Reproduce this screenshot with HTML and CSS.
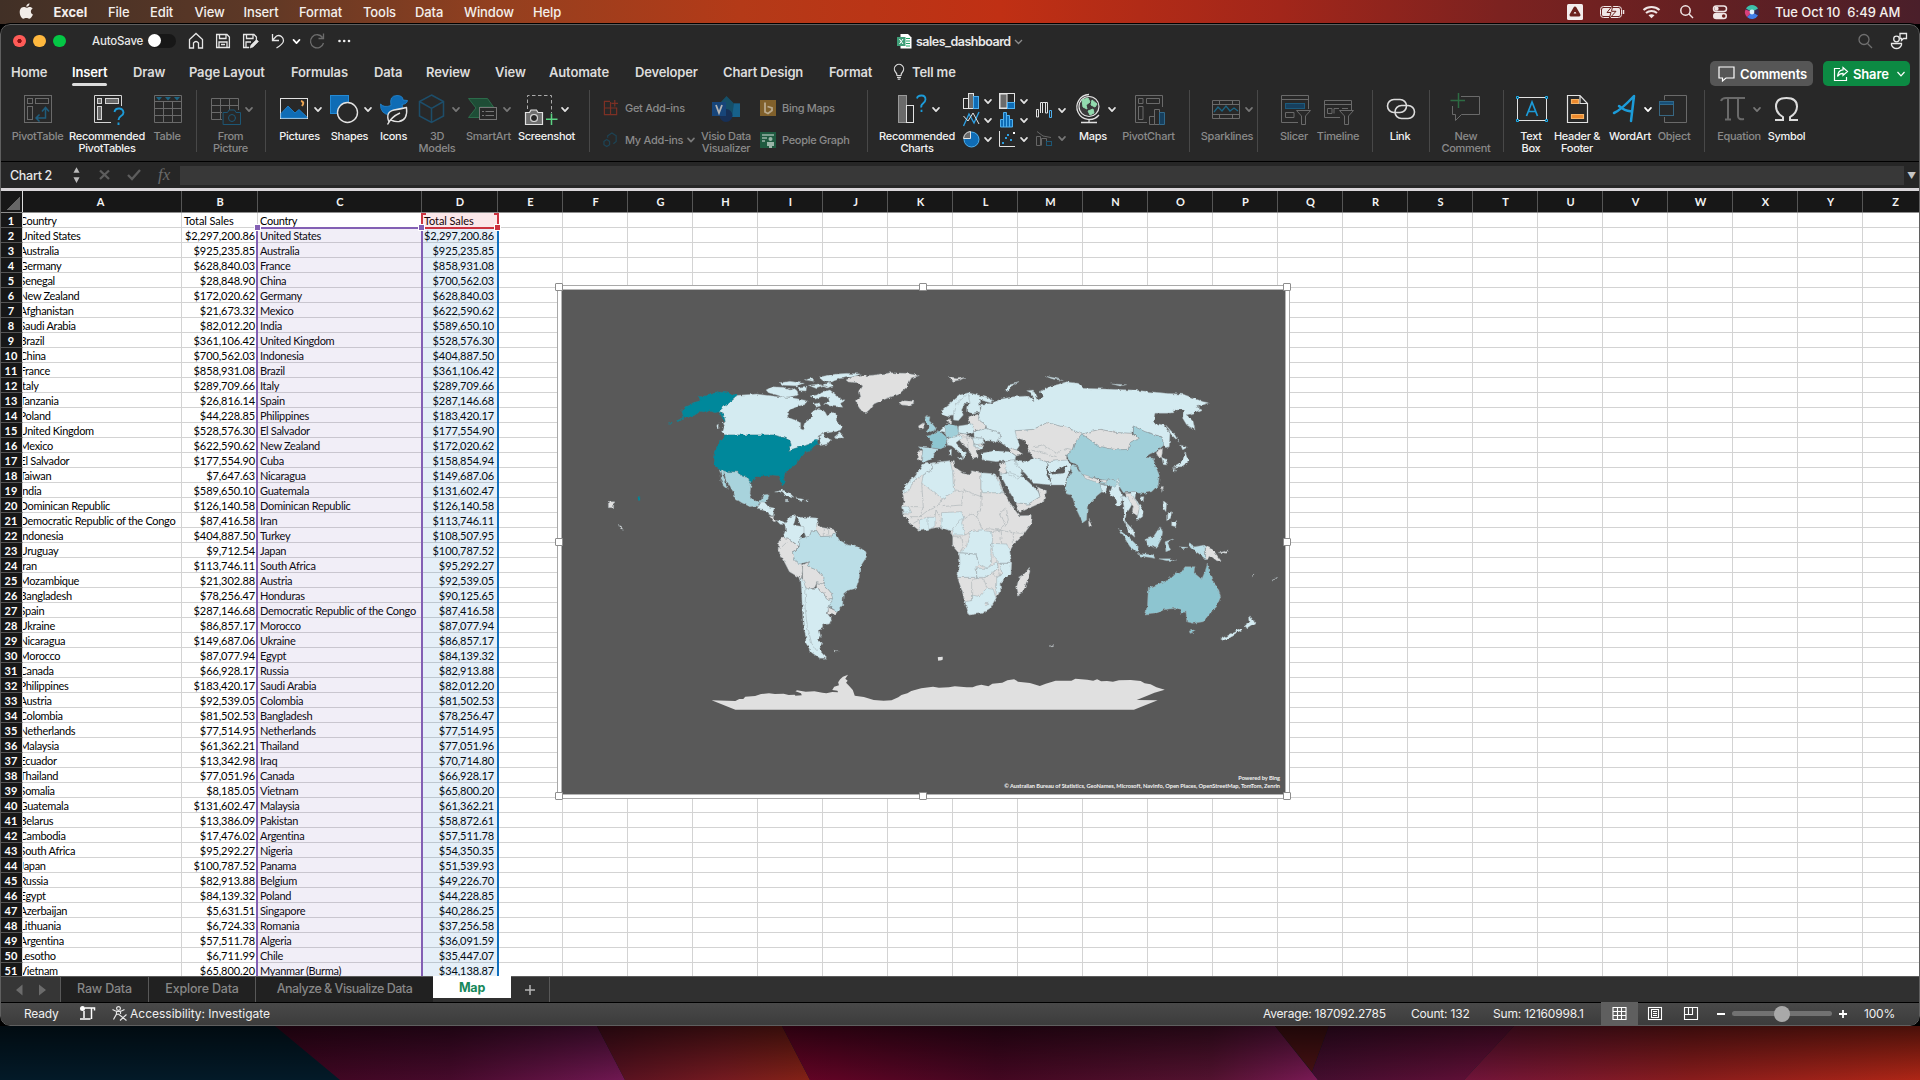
FILE: index.html
```html
<!DOCTYPE html>
<html lang="en">
<head>
<meta charset="utf-8">
<title>sales_dashboard</title>
<link rel="stylesheet" href="styles.css">
</head>
<body>
<svg class="defs" width="0" height="0">
  <defs>
    <path id="chev" d="M-3,-1.6L0,1.6L3,-1.6" fill="none" stroke-width="1.7" stroke-linecap="round" stroke-linejoin="round"/>
    <g id="camera"><path d="M0,3H4L5.5,0.5H11L12.500,3H17V15H0Z"/><circle cx="8.500" cy="8.500" r="3.500"/></g>
    <g id="pivot"><rect x="0.500" y="0.500" width="27" height="27" /><rect x="3.500" y="3.500" width="5" height="5"/><rect x="11.500" y="3.500" width="13" height="5"/><rect x="3.500" y="11.500" width="5" height="13"/></g>
  </defs>
</svg>

<header class="menubar">
  <svg class="apple" viewBox="19 3 16 17"><path d="M29.500,3.200c.2,1.700-1.400,3.600-3.200,3.600c-.2-1.700,1.500-3.400,3.200-3.600zM32.400,15.600c-.8,1.700-1.900,3.200-3.200,3.200c-1.100,0-1.500-.7-2.900-.7s-1.900,.7-2.900,.7c-2.200,0-4.800-6-3.200-9.300c.8-1.700,2.200-2.400,3.600-2.400c1.200,0,1.900,.7,2.800,.7s1.700-.8,3.200-.8c1,0,2.100,.5,2.800,1.500c-2.500,1.500-2.200,5.200,.6,6.200z" fill="#f1ece8"/></svg>
  <nav class="menus"><b>Excel</b><span>File</span><span>Edit</span><span>View</span><span>Insert</span><span>Format</span><span>Tools</span><span>Data</span><span>Window</span><span>Help</span></nav>
  <svg class="tray" viewBox="1564 0 200 24" fill="none" stroke="#f0e6e6" stroke-width="1.500">
    <rect x="1567" y="4" width="16" height="16" rx="1.500" fill="#f3eded" stroke="none"/>
    <path d="M1575,8L1579,15H1571Z" stroke="#6b211d" stroke-width="3" stroke-linejoin="round"/>
    <rect x="1600.500" y="6.500" width="21" height="11" rx="3" stroke-width="1"/><rect x="1602" y="8" width="18" height="8" rx="1.500" fill="#f0e6e6" stroke="none"/><path d="M1623.500,10V14" />
    <path d="M1613,5L1607,12.500H1611L1609,19L1616,11.300H1611.500Z" fill="#f0e6e6" stroke="#6b211d" stroke-width="1"/>
    <path d="M1643.500,10A12,12 0 0 1 1659.500,10M1646,13A8.500,8.500 0 0 1 1657,13" stroke-width="2.100"/><path d="M1648.500,15.300A5,5 0 0 1 1654.500,15.300L1651.500,18.300Z" fill="#f0e6e6" stroke="none"/>
    <circle cx="1685.500" cy="10.500" r="4.700"/><path d="M1689,14L1693,18"/>
    <rect x="1713.500" y="6" width="13" height="5.500" rx="2.750"/><circle cx="1716.500" cy="8.700" r="1.400" fill="#f0e6e6"/><rect x="1713" y="12.800" width="14" height="6.500" rx="3.200" fill="#f0e6e6" stroke="none"/><circle cx="1723.700" cy="16" r="1.800" fill="#6b211d" stroke="none"/>
    <circle cx="1752" cy="12" r="7" fill="#3a2b52" stroke="none"/><path d="M1746,8.500A7,7 0 0 1 1758,8.500L1752,12Z" fill="#3fc0a8" stroke="none"/><path d="M1747,17A7,7 0 0 0 1758,15.500L1752,12Z" fill="#3f7fe8" stroke="none"/><path d="M1745.500,9.500A7,7 0 0 0 1747,17L1752,12Z" fill="#d9407c" stroke="none"/><circle cx="1752" cy="12" r="2.400" fill="#dff3fa" stroke="none"/>
  </svg>
  <span class="clock">Tue Oct 10&nbsp; 6:49 AM</span>
</header>

<main class="window">
  <div class="titlebar">
    <i class="light red"></i><i class="light amber"></i><i class="light green"></i>
    <span class="autosave">AutoSave</span><span class="toggle"></span>
    <svg class="quick" viewBox="184 25 172 32" fill="none" stroke="#e6e6e6" stroke-width="1.300">
      <path d="M189.500,48V39.500L196,33.500L202.500,39.500V48H198.500V43Q196,40 193.500,43V48Z"/>
      <path d="M216.600,34.500H227L229.400,37V47.500H216.600ZM219.500,34.500V38.500H226V34.500M219,47.500V42H227V47.500M221,44.500H225"/>
      <path d="M249,47.500H243.600V34.500H254L256.400,37V40M246.500,34.500V38.500H253V34.500M246,47.500V42H251"/><path d="M250,48L251,45L256.500,39.500L258.500,41.500L253,47Z" fill="#e6e6e6" stroke-width=".6"/>
      <path d="M272.500,34V40.500H279M272.500,40.300L276.500,36A5,5 0 0 1 283.500,41Q283,44 276.500,48"/>
      <path d="M322.500,37.500A6.600,6.600 0 1 0 323.500,43M323.500,33.500V38.500H318.500" stroke="#6c6c6c"/>
      <g fill="#eee" stroke="none"><circle cx="339.500" cy="41" r="1.300"/><circle cx="344.200" cy="41" r="1.300"/><circle cx="349" cy="41" r="1.300"/></g>
      <use href="#chev" x="296.500" y="41.500"/>
    </svg>
    <svg class="docicon" viewBox="0 0 15 15"><path d="M3.500,0H11L14.500,3.500V14.500H3.500Z" fill="#fff"/><path d="M9,4.500H13M9,7H13M9,9.500H13M9,12H13" stroke="#21a366"/><rect y="3" width="8.500" height="9" fill="#3f9e78"/><path d="M2.500,5L6,10M6,5L2.500,10" stroke="#fff"/></svg>
    <span class="doc">sales_dashboard</span>
    <svg class="titlechev" viewBox="0 0 9 9"><path d="M1,3L4.500,6.500L8,3" fill="none" stroke="#8d8d8d" stroke-width="1.300"/></svg>
    <svg class="titleright" viewBox="1855 25 58 32" fill="none" stroke="#6f6f6f" stroke-width="1.300"><circle cx="1865" cy="39.500" r="5"/><path d="M1868.500,43.500L1873,48"/><g stroke="#eaeaea"><circle cx="1897.500" cy="39" r="2.800"/><path d="M1892.500,43.500H1902.500V45Q1901,48.500 1897.500,48.500Q1894,48.500 1892.500,45ZM1901,33.500H1907.500V38.500H1904.500L1902.500,40.500V38.500H1901Z"/></g></svg>
  </div>

  <div class="tabs">
    <nav class="tabnames"><span>Home</span><span class="on">Insert</span><span>Draw</span><span>Page Layout</span><span>Formulas</span><span>Data</span><span>Review</span><span>View</span><span>Automate</span><span>Developer</span><span>Chart Design</span><span>Format</span></nav>
    <svg class="bulb" viewBox="0 0 12 16" fill="none" stroke="#d8d8d8" stroke-width="1.200"><path d="M4,11.500Q4,9.500 2.500,8A4.600,4.600 0 1 1 9.500,8Q8,9.500 8,11.500ZM4,13.300H8M4.700,15.200H7.300"/></svg>
    <span class="tell">Tell me</span>
    <button class="comments"><svg viewBox="0 0 17 16"><path d="M1,1H16V12H8L4.500,15V12H1Z" fill="none" stroke="#fff" stroke-width="1.200"/></svg>Comments</button>
    <button class="share"><svg viewBox="0 0 16 16"><path d="M7,2.500H1.500V14.500H13.500V11M10,1.500L14.500,5.500L10,9.500V7.300Q6.500,7.300 4.500,10.500Q5,4.300 10,3.900Z" fill="none" stroke="#fff" stroke-width="1.200"/></svg>Share<svg class="sharechev" viewBox="0 0 10 10"><path d="M1.500,3L5,6.800L8.500,3" fill="none" stroke="#fff" stroke-width="1.200"/></svg></button>
  </div>

  <section class="ribbon">
    <div class="tool off"><svg viewBox="10 92 55 36" fill="none" stroke="#6a6a6a"><use href="#pivot" x="24" y="96"/><path d="M36,119H45.500V109M42,112.500L45.500,108.500L49,112.500M39.500,115.500L36,119L39.500,122.500" stroke="#1f5d7d" stroke-width="1.500"/></svg><span>PivotTable</span></div>
    <div class="tool"><svg viewBox="65 92 84 36" fill="none" stroke="#d5d5d5"><path d="M111,123.500H94.500V96.500H121.500V107"/><g fill="#6a6a6a"><rect x="97.500" y="99.500" width="4" height="5"/><rect x="105.500" y="99.500" width="13" height="5"/><rect x="97.500" y="107.500" width="4" height="13"/></g><path d="M114.500,113Q115,109.500 119,109.500T123.500,113.500Q123.500,115.500 121,117T118.500,121M118.500,123.500V126" stroke="#1c9bd8" stroke-width="1.900"/></svg><span>Recommended<br>PivotTables</span></div>
    <div class="tool off"><svg viewBox="149 92 36 36" fill="none" stroke="#6a6a6a"><path d="M154.500,96.500H181.500V123.500H154.500ZM154.500,102.500H181.500M154.500,109.500H181.500M154.500,116.500H181.500M163.500,102.500V123.500M172.500,102.500V123.500"/><path d="M156,98H162L159,101.500ZM165,98H171L168,101.500ZM174,98H180L177,101.500Z" fill="#1c6584" stroke="none"/></svg><span>Table</span></div>
    <i class="sep"></i>
    <div class="tool off"><svg viewBox="208 92 45 36" fill="none" stroke="#6a6a6a"><path d="M222,120.500H211.500V99.500H238.500V111M211.500,106.500H238.500M211.500,113.500H222M220.500,99.500V120.500M229.500,99.500V111"/><use href="#camera" x="223.500" y="110.500" stroke="#1d5775"/><use href="#chev" x="249" y="110.500" stroke="#777"/></svg><span>From<br>Picture</span></div>
    <i class="sep"></i>
    <div class="tool"><svg viewBox="278 92 43 36" fill="none" stroke="#e2e2e2"><rect x="280.500" y="99.500" width="27" height="20"/><path d="M281,119V114.500L288,107L295,114L299,110.500L307,118V119Z" fill="#0f6cb5" stroke="#2489d4" stroke-width=".8"/><path d="M301,102Q305,103 302,107" stroke="#eda552" stroke-width="2"/><use href="#chev" x="318" y="110.500"/></svg><span>Pictures</span></div>
    <div class="tool"><svg viewBox="321 92 57 36" fill="none" stroke="#e2e2e2"><rect x="330.500" y="96.500" width="18" height="18" fill="#0f6cb5" stroke="#2489d4"/><circle cx="347.500" cy="113.500" r="10" fill="#282828" stroke-width="1.400"/><use href="#chev" x="368" y="110.500"/></svg><span>Shapes</span></div>
    <div class="tool"><svg viewBox="378 92 31 36" fill="none" stroke="#e2e2e2"><path d="M380.500,105Q384,109 391,106.500Q389,96.500 397,96.500Q403,96.500 403,101L407.500,101.500Q407,105 402,105.500Q404,109 399,113Q396,116 390,116Q380,115 380.500,105Z" fill="#0f6cb5" stroke="#2489d4" stroke-width=".8"/><path d="M389,123Q385,113 394,111Q400,110 406.500,108.500Q408,121 399,122.500Q395,123 391,121M387.500,125.500Q391,118 400,114" fill="#282828" stroke-width="1.400"/></svg><span>Icons</span></div>
    <div class="tool off"><svg viewBox="409 92 56 36" fill="none" stroke="#1d4d69" stroke-width="1.500"><path d="M431.500,96L443.500,102.500V117L431.500,123.500L419.500,117V102.500ZM419.500,102.500L431.500,109.500L443.500,102.500M431.500,109.500V123.500"/><use href="#chev" x="456" y="110.500" stroke="#777"/></svg><span>3D<br>Models</span></div>
    <div class="tool off"><svg viewBox="465 92 47 36" fill="none" stroke="#777"><path d="M468.500,99.500H487.500L493.500,108H480V118.500H468.500L476,109Z" fill="#1e4d36" stroke="#2c6b4a"/><rect x="479.500" y="108.500" width="17" height="12" fill="#282828"/><path d="M482,112.500H484M485.500,112.500H494M482,116.500H484M485.500,116.500H494"/><use href="#chev" x="507" y="110.500"/></svg><span>SmartArt</span></div>
    <div class="tool"><svg viewBox="512 92 69 36" fill="none" stroke="#e2e2e2"><path d="M527.500,110V96.500H551.500V114" stroke-dasharray="3.500 2.500" stroke="#aaa"/><use href="#camera" x="525.500" y="110.500" fill="#6f6f6f" stroke-width="1.200"/><circle cx="534" cy="119" r="3.500" fill="#282828"/><path d="M551.500,114.500V126M546,120.300H557.500" stroke="#5bd383" stroke-width="1.500"/><use href="#chev" x="565" y="110.500"/></svg><span>Screenshot</span></div>
    <i class="sep"></i>
    <div class="addins pairs">
      <p><svg viewBox="0 0 17 17" fill="none" stroke="#7d3024" stroke-width="1.300"><path d="M7.500,1.500H1.500V15.500H14.500V8.500H1.500M8,2V15.500M12.500,0V7M9,3.500H16"/></svg>Get Add-ins</p>
      <p><svg viewBox="0 0 17 17" fill="none" stroke="#1d4354" stroke-width="1.300"><path d="M5,6V4L9.500,1L14,4V10L11,12.500M4,8L7,10V13.500L4,15.500L1,13.500V10Z"/></svg>My Add-ins<svg class="pchev" viewBox="-5 -5 10 10" stroke="#777"><use href="#chev"/></svg></p>
    </div>
    <div class="tool off"><svg viewBox="701 92 50 36"><path d="M726.500,97L734,104.500H740V118H727L720,104Z" fill="#154f68"/><path d="M734,104.500H740V118H732Z" fill="#17618a"/><circle cx="726" cy="116.500" r="6.500" fill="#173057"/><rect x="712" y="103" width="14" height="14" fill="#17457a"/><path d="M716,106L719,114L722,106" fill="none" stroke="#b4b4b4" stroke-width="1.800"/></svg><span>Visio Data<br>Visualizer</span></div>
    <div class="bing pairs">
      <p><svg viewBox="0 0 16 16"><rect width="16" height="16" fill="#80602b"/><path d="M5,2.500V12L8,13.500L12,10.500V8L7.500,6.500" fill="none" stroke="#b9a98d" stroke-width="1.800"/></svg>Bing Maps</p>
      <p><svg viewBox="0 0 16 16"><rect width="16" height="16" fill="#1f5a40"/><path d="M2,3H14M2,6H7M2,9H5" stroke="#9ab5a8" stroke-width="1.500"/><circle cx="10.500" cy="7" r="2" fill="#9ab5a8"/><path d="M7,10H14V14H12V16H9V14H7Z" fill="#9ab5a8"/></svg>People Graph</p>
    </div>
    <i class="sep"></i>
    <div class="tool"><svg viewBox="875 92 84 36" fill="none" stroke="#e2e2e2"><rect x="898.500" y="96.500" width="8" height="27" fill="#6a6a6a" stroke="#999"/><rect x="906.500" y="106.500" width="7" height="17"/><path d="M917,99.500Q917.500,96.500 921.500,96.500T925.500,100.500Q925.500,102.500 923,104.500T921.500,108.500M921.500,110.800V113" stroke="#1c9bd8" stroke-width="1.800"/><use href="#chev" x="936" y="110.500"/></svg><span>Recommended<br>Charts</span></div>
    <div class="tool chartset"><svg viewBox="959 92 106 60" fill="none" stroke="#e2e2e2">
      <rect x="963.500" y="99.500" width="5" height="10"/><rect x="968.500" y="94.500" width="5" height="15" fill="#6a6a6a"/><rect x="973.500" y="97.500" width="5" height="12" fill="#0f6cb5" stroke="#4fb0ee"/>
      <path d="M963.500,127L969,115L974,124L979,113" stroke="#2e9ee0" stroke-width="1.400"/><path d="M963.500,117L968,122L973,114L979,125"/>
      <circle cx="971.500" cy="140.500" r="7.500" fill="#0f6cb5" stroke="#4fb0ee"/><path d="M963.500,139.500A8,8 0 0 1 970.500,132.500V139.500Z" fill="#6a6a6a"/>
      <rect x="999.500" y="94.500" width="15" height="15"/><rect x="1000" y="95" width="7" height="14" fill="#6a6a6a"/><rect x="1007.500" y="103.500" width="7" height="6" fill="#0f6cb5" stroke="#4fb0ee"/>
      <path d="M1000.500,128V120.500H1003.500V113.500H1006.500V116.500H1009.500V120.500H1012.500V128ZM1003.500,120V128M1006.500,116V128M1009.500,120V128" fill="#0f6cb5" stroke="#4fb0ee"/>
      <path d="M999.500,132V147.500H1015"/><g fill="#2e9ee0" stroke="none"><rect x="1002" y="143" width="2" height="2"/><rect x="1005" y="138" width="2" height="2"/><rect x="1010" y="140" width="2" height="2"/><rect x="1007" y="135" width="2" height="2"/><rect x="1013" y="133" width="2" height="2" fill="#fff"/></g>
      <path d="M1036.500,118V110.500H1038.500V118ZM1040.500,114V103.500H1042.500V114M1042.500,103.500H1047.500V114H1045.500V103.500"/><path d="M1049.500,111.500H1051.500V118.500H1049.500Z" stroke="#4fb0ee"/>
      <g stroke="#666"><path d="M1036.500,146.500V137.500H1040.500V146.500ZM1041.500,146.500V139.500H1046.500V146.500M1037,132.500L1043,137L1051,138.500"/><rect x="1046.500" y="142.500" width="5" height="4" stroke="#1d5775"/></g>
      <use href="#chev" x="988" y="102.500"/><use href="#chev" x="988" y="121.500"/><use href="#chev" x="988" y="140.500"/><use href="#chev" x="1024" y="102.500"/><use href="#chev" x="1024" y="121.500"/><use href="#chev" x="1024" y="140.500"/><use href="#chev" x="1062" y="111.500"/><use href="#chev" x="1062" y="139.500" stroke="#777"/>
    </svg></div>
    <div class="tool"><svg viewBox="1065 92 56 36" fill="none" stroke="#e2e2e2"><circle cx="1089" cy="107.500" r="10" fill="#3b3b3b" stroke-width="1.200"/><path d="M1082,101L1088,99L1090,103L1086,106L1087,110L1083,108ZM1092,101L1097,105L1095,108L1091,106ZM1088,112L1093,110L1094,114L1090,116Z" fill="#92dcae" stroke="#92dcae"/><path d="M1089,95.500A12.500,12.500 0 1 0 1099,116M1089,120V123.500M1081,123.500H1097" stroke-width="1.300"/><use href="#chev" x="1112" y="110.500"/></svg><span>Maps</span></div>
    <div class="tool off"><svg viewBox="1121 92 55 36" fill="none" stroke="#6a6a6a"><path d="M1147,123.500H1135.500V96.500H1162.500V108"/><path d="M1138.500,99.500H1143V104.500H1138.500ZM1146.500,99.500H1159.500V104.500H1146.500ZM1138.500,107.500H1143V120.500H1138.500ZM1149.500,117.500H1154.500V125.500H1149.500ZM1154.500,110.500H1159.500V125.500H1154.500Z"/><path d="M1159.500,113.500H1164.500V125.500H1159.500Z" fill="#173f5d" stroke="#31698b"/></svg><span>PivotChart</span></div>
    <i class="sep"></i>
    <div class="tool off"><svg viewBox="1202 92 50 36" fill="none" stroke="#6a6a6a"><path d="M1212.500,101.500H1239.500V119.500H1212.500ZM1212.500,105.500H1239.500M1212.500,115.500H1239.500M1219.500,101.500V105.500M1232.500,101.500V105.500M1219.500,115.500V119.500M1232.500,115.500V119.500"/><path d="M1214,113L1218,108L1222,112L1226,107L1230,112L1234,109L1238,112" stroke="#1c6584" stroke-width="1.300"/><use href="#chev" x="1249" y="110.500" stroke="#777"/></svg><span>Sparklines</span></div>
    <i class="sep"></i>
    <div class="tool off"><svg viewBox="1263 92 62 36" fill="none" stroke="#6a6a6a"><path d="M1298,123.500H1281.500V96.500H1308.500V110M1281.500,100.500H1308.500M1285.500,113.500H1294V118.500H1285.500Z"/><rect x="1285.500" y="104.500" width="19" height="5" fill="#173f5d" stroke="#1c5a7c"/><path d="M1296.500,111.500H1310.500L1305.500,117V125.500H1301.500V117Z" fill="#282828"/></svg><span>Slicer</span></div>
    <div class="tool off"><svg viewBox="1325 92 26 36" fill="none" stroke="#6a6a6a"><path d="M1340,118.500H1324.500V101.500H1351.500V111M1324.500,105.500H1351.500M1327.500,109.500H1332V114.500H1327.500ZM1334,114.500V109.500H1339M1342,109.500H1348"/><path d="M1339.500,111.500H1353.500L1348.500,117V125.500H1344.500V117Z" fill="#282828"/></svg><span>Timeline</span></div>
    <i class="sep end"></i>
    <div class="tool"><svg viewBox="1373 92 54 36" fill="none" stroke="#dcdcdc" stroke-width="1.600"><rect x="1387.500" y="100.500" width="19" height="13" rx="6.500"/><rect x="1395" y="106.500" width="19.500" height="13" rx="6.500"/></svg><span>Link</span></div>
    <i class="sep"></i>
    <div class="tool off"><svg viewBox="1432 92 68 36" fill="none" stroke="#6a6a6a"><path d="M1461,97.500H1479.500V115.500H1461.500L1455.500,121.500V115.500H1452.500V107"/><path d="M1458.500,94V109M1450.500,101.500H1465" stroke="#2d6b43" stroke-width="1.500"/></svg><span>New<br>Comment</span></div>
    <i class="sep"></i>
    <div class="tool"><svg viewBox="1507 92 48 36" fill="none" stroke="#e2e2e2"><rect x="1517.500" y="98.500" width="29" height="23"/><path d="M1526.500,117L1532,103L1537.500,117M1528.500,112.500H1535.500" stroke="#1c9bd8" stroke-width="1.700"/><path d="M1516.500,97.500h2v2h-2zM1545.500,97.500h2v2h-2zM1516.500,120.500h2v2h-2zM1545.500,120.500h2v2h-2z" stroke="#1cb0ee" fill="#282828"/></svg><span>Text<br>Box</span></div>
    <div class="tool"><svg viewBox="1555 92 44 36" fill="none" stroke="#e2e2e2" stroke-width="1.200"><path d="M1567.500,96.500H1580L1587.500,104.500V123.500H1567.500ZM1580,96.500V104.500H1587.500"/><path d="M1571.500,100.500H1578.500V104.500H1571.500ZM1571.500,115.500H1583.500V119.500H1571.500Z" fill="#ee8a2e" stroke="#f5b366"/></svg><span>Header &amp;<br>Footer</span></div>
    <div class="tool"><svg viewBox="1599 92 62 36" fill="none" stroke="#1c9bd8" stroke-width="2.500" stroke-linecap="round" stroke-linejoin="round"><path d="M1614,114Q1621,111 1634,97L1631,122M1619,107Q1626,113 1632,112"/><use href="#chev" x="1648" y="110.500" stroke="#fff"/></svg><span>WordArt</span></div>
    <div class="tool off"><svg viewBox="1661 92 26 36" fill="none" stroke="#6a6a6a"><path d="M1664.500,101V96.500H1686.500V123.500H1664.500V118"/><rect x="1659.500" y="102.500" width="14" height="14" stroke="#386782" fill="#282828"/><rect x="1659.500" y="102.500" width="14" height="3" fill="#174f77" stroke="#31698b"/></svg><span>Object</span></div>
    <i class="sep"></i>
    <div class="tool off"><svg viewBox="1722 92 34 36" fill="none" stroke="#6a6a6a" stroke-width="2"><path d="M1721,102Q1722,99 1726,99H1745M1728,99V120M1725,120.500H1731M1738,99V117Q1738,121 1744,120"/><use href="#chev" x="1757" y="110.500" stroke="#777"/></svg><span>Equation</span></div>
    <div class="tool"><svg viewBox="1756 92 61 36" fill="none" stroke="#dcdcdc" stroke-width="2"><path d="M1775,121H1783V118Q1776,114 1776,107.500Q1776,99 1786.500,99T1797,107.500Q1797,114 1790,118V121H1798"/></svg><span>Symbol</span></div>
  </section>

  <div class="formula">
    <span class="name">Chart 2</span>
    <svg class="stepper" viewBox="0 0 8 20" fill="#bbb"><path d="M4,1L7.500,7.500H.5ZM4,19L7.500,12.500H.5Z"/></svg>
    <svg class="fx" viewBox="86 163 64 26" fill="none" stroke="#5d5d5d" stroke-width="2.300"><path d="M101,171.500L110,180M110,171.500L101,180M129,176L133,180L141,171"/></svg>
    <em>fx</em>
    <div class="entry"></div><span class="drop">▼</span>
  </div>

  <section class="sheet" id="sheet">
    <div class="cols" id="cols"></div>
    <div class="body" id="body">
      <div class="sel purple"></div><div class="sel blue"></div><div class="sel rose"></div>
      <i class="knob k1"></i><i class="knob k2"></i><i class="knob k3"></i>
      <figure class="chart">
        <svg viewBox="0 0 723 504" class="map">
          <defs><filter id="coast" x="-5%" y="-5%" width="110%" height="110%"><feTurbulence type="fractalNoise" baseFrequency=".22" numOctaves="3" seed="4"/><feDisplacementMap in="SourceGraphic" scale="3.500" xChannelSelector="R" yChannelSelector="G"/></filter></defs>
          <g filter="url(#coast)">
          <g transform="translate(-12,-10) scale(.33333)" class="land">
            <path class="us" d="M395,392L408,388L402,380L425,370L450,362L448,350L470,347L508,336L530,338L562,346L508,395L495,398L478,392L468,397L450,394L440,402L425,408L412,413L400,410L398,402ZM508,395L525,403L526,428L515,410ZM380,422L400,414L402,417L382,425ZM355,429L366,427V430Z"/>
            <path class="lt" d="M562,346L620,342L650,346L690,350L720,352L750,358L772,362L765,374L745,378L725,388L712,398L714,412L735,420L752,428L752,446L760,450L768,425L780,418L788,410L785,395L795,386L815,390L825,395L832,408L845,395L858,402L860,425L877,438L872,450L855,455L835,458L820,460L805,468L803,480L790,488L775,494L740,504L715,512L724,498L720,482L705,474L690,470L670,465L525,465L515,455L520,440L516,430L526,425L522,403L508,393Z"/>
            <path class="lt" d="M806,470L820,462L826,472L845,480L835,492L808,497L812,484ZM852,472L868,458L874,464L882,474L866,474ZM500,435L508,432L507,446ZM780,348L800,345L815,335L840,330L865,350L885,362L872,370L878,382L860,380L840,378L820,372L838,366L835,352L815,350L795,358ZM648,330L665,320L700,322L720,330L738,325L745,345L725,350L700,352L680,345L655,338ZM690,308L720,304L760,310L740,318L700,316ZM765,300L785,294L790,304ZM775,316L805,312L825,318L800,326ZM812,290L850,283L890,280L935,282L910,290L870,296L850,304L835,308L815,300ZM747,322L770,318L768,336L750,335ZM812,316L840,308L850,318L830,324ZM790,372L808,368L812,378L798,382Z"/>
            <path class="gr" d="M888,300L905,292L940,288L980,284L1020,278L1070,280L1108,287L1085,293L1078,305L1070,322L1058,332L1045,344L1020,352L990,364L972,372L960,388L948,398L932,390L922,375L920,360L932,350L928,335L938,318L925,308L895,306ZM1048,368L1062,362L1090,364L1092,370L1075,377L1055,375Z"/>
            <path class="us" d="M525,465L670,465L690,470L705,474L720,482L724,498L715,512L740,504L775,494L790,488L798,477L804,490L790,500L780,512L765,518L755,530L742,540L740,552L725,562L705,578L702,592L703,612L697,617L690,600L688,587L665,585L650,588L630,588L610,596L602,612L590,592L578,590L568,576L520,575L498,562L490,545L492,520L505,495ZM263,653h7v5h-7z"/>
            <path class="mx" d="M508,570L530,575L568,577L578,590L590,592L604,612L600,640L606,658L620,664L634,660L640,645L658,642L654,658L640,668L625,672L630,682L615,678L600,680L575,668L555,655L552,640L538,615L528,600L522,577L518,582L524,598L532,628L520,618L512,600L514,588Z"/>
            <path class="lt" d="M622,685L634,665L645,668L655,680L672,684L670,710L655,702L645,690ZM680,722L695,722L707,730L702,734L690,733ZM674,636L695,630L720,640L732,652L715,648L690,637ZM737,654L762,658L750,664ZM706,661h10v4h-10zM768,660h9v4h-9z"/>
            <path class="gr" d="M658,708L668,710L680,722L672,726ZM175,665h16v18h-16zM208,736L216,740L220,748L212,746Z"/>
            <path class="lt" d="M705,730L718,712L740,705L745,712L770,712L800,714L805,728L800,752L785,752L780,765L768,775L762,758L750,770L748,800L715,775L698,772L707,750ZM738,705L735,722L730,735L762,740L762,758"/>
            <path class="gr" d="M686,785L695,773L715,775L745,800L728,820L735,842L755,852L758,870L754,897L718,875L700,840L684,812ZM800,730L812,742L850,748L857,758L845,768L812,770L800,752ZM820,744V768M836,746V768M688,808L712,785"/>
            <path class="lt" d="M752,895L760,895L768,924L800,925L822,940L830,958L848,955L838,980L832,1000L845,1018L838,1032L818,1035L818,1045L808,1050L812,1070L805,1080L815,1090L808,1110L830,1135L810,1135L785,1118L768,1090L767,1070L760,1040L757,990L755,940Z"/>
            <path class="ln" d="M768,924L765,980L772,1040L785,1090L800,1112"/>
            <path class="gr" d="M758,855L775,846L775,860L805,872L822,895L820,912L800,908L795,922L768,924L758,900ZM800,908L820,912L845,940L848,955L830,958L822,940L800,925ZM835,982L862,995L855,1005L835,1003ZM852,1112h12v3h-12z"/>
            <path class="br" d="M800,752L812,770L845,768L857,758L868,780L895,795L925,800L948,815L950,830L930,862L928,895L918,925L895,932L880,945L878,975L862,995L838,980L848,955L845,940L820,912L822,895L805,872L775,860L775,845L750,852L735,842L728,820L748,800L750,770L768,775L780,765L785,752Z"/>
          </g>
          <g transform="translate(338,60) scale(.33333)" class="land">
            <path class="gr" d="M70,342L100,338L150,332L160,335L162,350L185,365L210,372L215,362L240,368L285,372L300,395L315,435L345,480L358,497L397,496L395,520L370,555L340,585L328,605L335,640L333,670L300,700L302,722L288,745L270,775L245,790L207,795L195,755L185,720L172,682L180,640L175,605L158,585L158,560L150,542L120,532L85,538L58,542L30,520L8,490L5,470L12,455L8,430L20,400L45,380L65,350Z"/>
            <path class="ln" d="M65,400L70,470L35,470M70,470L60,500L30,500M128,446L110,470L85,480L60,500M168,420L190,425L185,465L125,470M158,365L165,390L160,412M190,420L243,440V368M243,428V470L230,500L215,490L190,510M230,500L245,535L300,540L315,520L300,490L315,475M243,470L235,480M300,540L340,548L370,550M320,480L325,510L315,530M340,545V585M275,545L300,540L305,580M158,560H185L190,590L178,608M195,555L215,545M172,682L230,682L215,700V752M230,682L250,685L262,715M250,685L275,670L290,680M105,502L108,480L120,500M40,520L58,510M243,428H312"/>
            <path class="lt" d="M70,342L95,340L95,360L70,375L50,385L35,400L30,420L8,432L20,400L45,380ZM95,340L150,332L158,365L160,412L168,420L128,446L65,400L70,375L95,360ZM243,368L285,372L295,395L310,428H243ZM5,470L25,468L35,488L10,490ZM58,510L80,502L105,502L105,532L85,538L58,542ZM84,502V538M125,488L185,485L190,500L185,520L195,555L160,555L158,540L150,542L122,530ZM190,500L165,530L158,540M212,545L240,540L275,545L278,570L272,600L275,640L262,655L235,640L228,612L200,610L178,608L200,590L205,560ZM178,608L228,612L235,640L228,650L230,682L172,682L180,640ZM230,655L262,655L290,635L295,650L280,665L255,682L230,682ZM275,580L320,582L330,605L334,640L300,640L280,620ZM300,640L334,640L333,670L300,700L302,722L288,735L290,700L290,680L305,675ZM195,755L215,752L215,735L240,740L262,715L280,718L288,745L270,775L245,790L207,795Z"/>
            <path class="gr" d="M388,652L390,665L370,725L355,735L350,710L358,680L375,670ZM255,760L262,756L266,764L258,768ZM293,640L300,640L306,670L298,676ZM55,300L68,302L64,332L55,330ZM55,228L70,218L72,235L58,238ZM565,508L575,525L567,530ZM145,82L170,86L198,82L180,90L160,94ZM143,210L152,206L152,220L143,218Z"/>
            <path class="gr" d="M203,200L235,192L240,212L258,225L255,238L222,242L208,215ZM165,250L200,252L215,262L250,265L248,280L245,300L228,302L232,320L220,325L205,298L185,280L172,262ZM345,242L400,238L440,218L500,232L545,252L525,280L520,300L500,315L500,332L440,335L400,325L388,305L370,270L345,262ZM325,292L350,300L368,312L350,318L335,308ZM298,340L325,335L325,360L300,380Z"/>
            <path class="es" d="M55,290L95,294L117,298L100,312L98,325L75,335L64,332L68,302Z"/>
            <path class="fr" d="M78,258L95,255L118,242L140,262L138,290L118,297L97,293L98,275Z"/>
            <path class="cn" d="M75,200L90,200L88,212L100,225L110,238L95,245L78,243L88,230L78,215ZM135,228L150,220L172,228L176,250L165,262L140,264L135,245Z"/>
            <path class="lt" d="M120,242L133,230L137,248ZM125,180L150,160L180,135L205,128L235,135L260,142L282,152L270,158L238,150L242,185L215,190L200,185L200,170L210,160L195,160L185,180L190,195L175,212L160,210L160,195L140,200L125,192ZM160,195L165,165L200,135M205,132L210,160M175,228L215,222L222,245L200,252L175,248ZM222,245L260,235L300,248L305,262L285,275L262,272L240,265L222,260ZM218,265L245,262L254,280L222,285ZM140,268L180,255L185,265L168,278L180,295L200,308L190,325L180,308L155,288L142,285ZM172,322L188,324L182,330ZM148,298L155,298L154,315L148,315ZM245,310L280,302L330,305L348,318L345,330L290,335L250,330ZM220,288L222,280L250,292L245,300Z"/>
            <path class="lt" d="M240,185L245,163L275,160L300,148L340,140L385,138L402,152L395,130L380,122L400,120L415,150L430,140L420,125L450,110L500,95L535,100L550,115L640,118L700,120L800,130L850,133L910,155L928,158L915,162L890,170L905,178L880,190L860,195L880,215L885,240L860,225L848,205L850,180L820,180L822,188L800,190L765,190L760,218L790,225L810,250L808,290L794,294L785,260L735,245L700,228L695,250L650,248L600,238L545,252L500,232L440,218L400,238L345,242L350,262L360,285L350,300L320,290L290,270L305,262L300,248L260,235L258,225L240,212L235,192ZM315,122L325,105L360,97L330,110L330,125ZM435,78L465,84L490,92L455,86ZM635,102L680,104L660,108ZM797,225L825,255L837,277L812,252ZM842,285L862,292L848,300ZM855,305L866,335L845,350L820,352L840,340L850,325ZM818,355L828,357L824,367ZM785,322L798,328L803,345L790,344ZM722,440L732,440L730,452L722,450Z"/>
            <path class="gr" d="M545,252L600,238L650,248L695,250L715,265L690,280L685,298L650,300L600,290L570,270ZM768,308L788,295L785,323L775,320ZM785,408L790,412L785,427ZM348,458L385,462L420,440L412,410L440,425L430,455L358,488Z"/>
            <path class="cn" d="M545,252L570,270L600,290L650,300L685,298L690,280L715,265L700,250L700,228L735,245L785,262L792,285L775,300L750,312L735,322L760,325L765,345L778,375L775,405L755,425L725,432L700,425L670,428L655,405L640,385L620,392L580,382L545,375L535,350L510,335L500,315L520,300L530,270Z"/>
            <path class="lt" d="M345,330L385,335L402,325L440,335L500,330L515,350L500,385L495,405L455,405L400,400L375,370L350,350ZM440,335L440,375L455,405M440,375L490,370L500,345M315,335L345,328L370,375L350,385L320,370ZM300,372L330,368L370,382L390,400L415,425L420,440L385,462L348,458L325,420ZM600,402L620,408L618,430L603,425ZM640,400L655,385L658,420L672,440L660,465L650,468L645,445L628,432ZM665,440L690,435L700,455L690,475L680,490L675,510L690,540L672,515L672,470ZM690,425L708,425L705,445L730,480L728,500L710,512L716,480L695,440ZM672,510L700,540L705,562L685,545ZM790,452L800,460L798,485L790,475ZM800,490L815,485L812,505L800,512ZM815,515L830,515L828,530L815,527ZM1048,795L1065,818L1040,835L1035,825L1050,815ZM962,867L1020,835L1025,840L970,872Z"/>
            <path class="in" d="M510,345L530,350L545,375L580,390L600,400L640,385L655,400L640,412L620,405L600,402L606,425L590,438L562,470L560,510L548,518L530,480L515,435L495,430L500,390L515,365Z"/>
            <path class="gr" d="M550,373L600,390L598,400L555,385ZM603,390h16v8h-16zM675,430L695,430L718,475L712,500L695,490L700,470ZM917,588L940,600L965,635L950,632L935,620L917,628ZM955,608L985,600L980,610ZM115,922h12v8h-12zM449,886h8v4h-8zM1115,688L1130,682L1122,690ZM1058,670h3v10h-3z"/>
            <path class="id" d="M655,535L680,555L715,590L712,608L690,590ZM715,610L760,615L765,625L720,618ZM775,626L810,626L830,630L800,632ZM735,568L760,560L780,530L788,545L785,565L770,595L740,585ZM795,575L825,565L803,578L812,600L798,605ZM838,590L865,592L850,596ZM865,577L885,590L915,585L917,628L895,610L875,598Z"/>
            <path class="fr" d="M745,715L780,700L805,690L830,665L842,670L855,650L885,650L882,668L905,688L915,665L922,642L930,670L938,695L955,715L962,740L950,770L930,790L910,815L880,820L860,815L858,785L845,790L840,778L825,775L790,780L765,792L735,795L742,770ZM868,843L887,838L880,848L870,850Z"/>
            <path class="sea" d="M355,275L375,270L385,290L380,300L396,330L380,332L365,300ZM255,285L275,275L300,285L325,300L285,302L255,300Z"/>
            <path class="ln" d="M400,290L430,285L470,310L500,295L520,300M395,300L430,310L470,320M180,260L215,262M200,252L205,298M215,262L230,300"/>
          </g>
          </g>
          <path transform="translate(118,350) scale(.3954,.3333)" class="gr" d="M80,181L140,183L150,177L160,177L165,170L190,168L205,162L225,160L240,162L262,161L275,165L290,164L292,167L308,166L306,160L292,154L296,151L318,155L340,154L360,158L370,160L385,156L400,157L398,152L385,150L390,140L402,136L400,127L405,118L412,110L425,104L418,116L424,122L420,128L428,138L437,150L442,167L465,171L490,180L515,182L535,181L552,172L560,165L575,160L585,153L610,145L640,140L655,143L680,142L695,139L725,142L740,142L750,137L762,134L780,139L790,131L815,128L828,121L845,118L855,125L885,129L910,138L925,131L950,122L990,122L1000,116L1030,119L1045,122L1055,118L1065,124L1080,123L1095,125L1110,121L1140,120L1165,123L1175,130L1190,133L1205,142L1226,149L1200,158L1180,168L1155,180L1208,181L1148,209L140,209ZM652,52L664,50V60L653,62Z"/>
        </svg>
        <figcaption>Powered by Bing<br>© Australian Bureau of Statistics, GeoNames, Microsoft, Navinfo, Open Places, OpenStreetMap, TomTom, Zenrin</figcaption>
        <i class="grip nw"></i><i class="grip n"></i><i class="grip ne"></i><i class="grip w"></i><i class="grip e"></i><i class="grip sw"></i><i class="grip s"></i><i class="grip se"></i>
      </figure>
    </div>
  </section>

  <nav class="sheettabs">
    <span class="arrows"><svg viewBox="0 0 60 25"><path d="M21.500,7.500V18.500L15,13ZM38,7.500V18.500L45,13Z" fill="#6b6b6b"/></svg></span>
    <span class="st raw">Raw Data</span><span class="st explore">Explore Data</span><span class="st analyze">Analyze &amp; Visualize Data</span><span class="st current">Map</span><span class="plus"><svg viewBox="0 0 10 10"><path d="M5,0V10M0,5H10" stroke="#b5b5b5" stroke-width="1.500"/></svg></span>
  </nav>

  <footer class="status">
    <span class="ready">Ready</span>
    <svg class="macro" viewBox="78 1003 20 22" fill="none" stroke="#fff" stroke-width="1.500"><circle cx="82.500" cy="1008.500" r="2.500" fill="#fff" stroke="none"/><path d="M85,1008H94.500V1010.500M84,1011V1018M80,1019H90.500M91.500,1008V1019"/></svg>
    <svg class="access" viewBox="110 1003 18 22" fill="none" stroke="#e6e6e6" stroke-width="1.200"><circle cx="118.500" cy="1008.500" r="1.900"/><path d="M112.500,1009.500Q118.500,1013.500 124.500,1009.500M116.500,1011.500V1014L113.500,1019.500M120.500,1011.500V1014M119,1014.500L126.500,1020.500M126.500,1014.500L120,1020.500M116.500,1014.500L119,1014"/></svg>
    <span class="acc">Accessibility: Investigate</span>
    <span class="avg">Average: 187092.2785</span><span class="cnt">Count: 132</span><span class="sum">Sum: 12160998.1</span>
    <svg class="views" viewBox="1601 1003 110 21" fill="none" stroke="#fff" stroke-width="1.100"><rect x="1601" y="1002" width="37" height="24" fill="#5f5f5f" stroke="none"/><path d="M1613,1007.500H1626V1019.500H1613ZM1613,1011.500H1626M1613,1015.500H1626M1617.500,1007.500V1019.500M1621.500,1007.500V1019.500"/><rect x="1648.500" y="1007.500" width="13" height="12"/><path d="M1651.500,1009.500H1658.500V1017.500H1651.500ZM1653,1011.500H1657M1653,1013.500H1657M1653,1015.500H1657"/><path d="M1684.500,1007.500H1697.500V1019.500H1684.500ZM1684.500,1014.500H1692.500V1007.500M1688.500,1007.500V1014.500"/></svg>
    <span class="minus"></span><span class="track"><i></i></span><svg class="zoomin" viewBox="0 0 8 8"><path d="M4,0V8M0,4H8" stroke="#fff" stroke-width="1.800"/></svg>
    <span class="pct">100%</span>
  </footer>
</main>

<svg class="desk" viewBox="0 1026 1920 54" preserveAspectRatio="none">
  <defs>
    <linearGradient id="g1" x2="1"><stop offset="0" stop-color="#3d051f"/><stop offset=".5" stop-color="#460a2b"/><stop offset="1" stop-color="#701852"/></linearGradient>
    <linearGradient id="g2" x2="1"><stop offset="0" stop-color="#521020"/><stop offset=".6" stop-color="#741a20"/><stop offset="1" stop-color="#842216"/></linearGradient>
    <linearGradient id="g3" x2="1"><stop offset="0" stop-color="#660325"/><stop offset=".4" stop-color="#430721"/><stop offset=".8" stop-color="#52122f"/><stop offset="1" stop-color="#7a1a55"/></linearGradient>
    <linearGradient id="g4" x2="1"><stop offset="0" stop-color="#430d2e"/><stop offset="1" stop-color="#651038"/></linearGradient>
    <linearGradient id="g5" x2="1"><stop offset="0" stop-color="#70143a"/><stop offset=".5" stop-color="#881c1c"/><stop offset="1" stop-color="#ae2616"/></linearGradient>
    <linearGradient id="sh" x2="0" y2="1"><stop offset="0" stop-color="#000" stop-opacity=".58"/><stop offset="1" stop-color="#000" stop-opacity="0"/></linearGradient>
  </defs>
  <rect y="1026" width="1920" height="54" fill="#031a28"/>
  <path d="M275,1026H597L625,1080H340Z" fill="url(#g1)"/>
  <path d="M597,1026H782L810,1080H625Z" fill="url(#g2)"/>
  <path d="M782,1026H1275L1318,1080H810Z" fill="url(#g3)"/>
  <path d="M1275,1026H1329L1312,1072Z" fill="#4a1214"/>
  <path d="M1329,1026H1514L1464,1080H1318L1312,1072Z" fill="url(#g4)"/>
  <path d="M1514,1026H1920V1080H1464Z" fill="url(#g5)"/>
  <rect y="1026" width="1920" height="54" fill="url(#sh)"/>
</svg>
<script src="sheet.js"></script>
</body>
</html>
```
FILE: styles.css
```css
* { box-sizing: border-box; }
body { margin: 0; width: 1920px; height: 1080px; overflow: hidden; display: flex; flex-direction: column; background: #000; font-family: Inter, "Liberation Sans", sans-serif; color: #e8e8e8; }
svg { display: block; overflow: visible; flex: none; }
.defs { position: absolute; }
span, b { white-space: nowrap; }

.menubar { height: 24px; display: flex; align-items: center; background: linear-gradient(90deg, #413026 0, #5d3826 250px, #94401f 500px, #b43a18 740px, #c03014 1000px, #a2261a 1280px, #7c2220 1500px, #642022 1700px, #4a1f2a 1920px); font-size: 13px; letter-spacing: -.1px; color: #f4efec; font-weight: 500; }
.apple { width: 16px; height: 17px; margin-left: 19px; margin-bottom: 1px; }
.menus { display: grid; grid-template-columns: 54.500px 42px 44.500px 49px 55.500px 64px 52px 49px 69px 40px; margin-left: 18.500px; width: 520px; margin-top: -1px; }
.tray { width: 200px; height: 24px; margin-left: 990.500px; }
.clock { margin: -1px 0 0 11px; letter-spacing: -.03px; }

.window { height: 1002px; background: #282828; border-radius: 10px; overflow: hidden; border: 1px solid #5f5f5f; outline: 1px solid #000; display: flex; flex-direction: column; margin: 0; }
.titlebar { height: 32px; display: flex; align-items: center; flex: none; }
.light { width: 12.500px; height: 12.500px; border-radius: 50%; margin-right: 7.500px; }
.light.red { margin-left: 12px; background: radial-gradient(#8a0f12 0 1.900px, #ff5b57 2.400px); }
.amber { background: #ffb83e; }
.green { background: #04c745; }
.autosave { margin-left: 19px; width: 56px; font-size: 11.500px; font-weight: 500; letter-spacing: -.2px; }
.toggle { width: 28px; height: 14px; border-radius: 7px; background: #171717; }
.toggle::before { content: ""; display: block; width: 13px; height: 13px; border-radius: 50%; background: #fff; }
.quick { width: 172px; height: 32px; margin-left: 8px; }
.quick use { stroke: #fff; }
.docicon { width: 15px; height: 15px; margin-left: 541px; }
.doc { font-size: 12.500px; font-weight: 600; letter-spacing: -.5px; margin-left: 4px; width: 98px; }
.titlechev { width: 9px; height: 9px; }
.titleright { width: 58px; height: 32px; margin-left: 831px; }

.tabs { height: 33px; display: flex; align-items: center; flex: none; font-size: 13px; font-weight: 600; letter-spacing: -.15px; color: #dcdcdc; }
.tabnames { display: grid; grid-template-columns: 61px 61px 56px 102px 83px 52px 69px 54px 86px 88px 106px 63px; margin-left: 10px; margin-top: -4px; }
.tabnames span { justify-self: start; }
.tabnames .on { position: relative; color: #fff; }
.tabnames .on::after { content: ""; position: absolute; left: 0; right: 0; bottom: -6px; height: 3px; border-radius: 2px; background: #dcdcdc; }
.bulb { width: 12px; height: 16px; margin-left: 1px; margin-top: -4px; }
.tell { margin: -4px 0 0 7px; width: 798px; }
button { height: 25px; border: 0; border-radius: 5px; font: 600 13px Inter, sans-serif; letter-spacing: -.15px; color: #fff; display: flex; align-items: center; padding: 0 0 0 8px; white-space: nowrap; }
.comments { width: 103px; background: #565656; margin-left: 0; }
.comments svg { width: 17px; height: 16px; margin-right: 5px; }
.share { width: 87px; background: #0c8a43; margin-left: 10px; padding-left: 10px; }
.share svg { width: 16px; height: 16px; margin-right: 4px; }
.share .sharechev { width: 10px; height: 10px; margin: 0 0 0 7px; }

.ribbon { height: 71px; flex: none; display: grid; padding-left: 9px; grid-template-columns: 55px 84px 36px 23px 45px 25px 43px 57px 31px 56px 47px 69px 16px 104px 50px 109px 15px 84px 106px 56px 55px 26px 50px 11px 62px 26px 22px 54px 5px 68px 7px 48px 44px 62px 26px 35px 34px 61px; }
.tool { display: flex; flex-direction: column; align-items: center; padding-top: 1px; }
.tool svg { width: 100%; height: 36px; }
.tool.chartset svg { height: 60px; }
.tool use { stroke-linecap: round; }
.tool span { font-size: 11px; line-height: 12px; letter-spacing: -.3px; font-weight: 500; text-align: center; margin-top: 3px; color: #f2f2f2; }
.tool.off span, .pairs p { color: #8a8a8a; }
.sep { justify-self: center; width: 1px; height: 62px; background: #484848; }
.sep.end { justify-self: end; }
.pairs { padding: 9px 0 0 6px; display: flex; flex-direction: column; gap: 14px; }
.bing { padding-left: 9px; }
.pairs p { margin: 0; height: 18px; display: flex; align-items: center; font-size: 11px; font-weight: 500; letter-spacing: -.3px; white-space: nowrap; }
.pairs p svg { width: 16px; height: 16px; margin-right: 6px; }
.pairs p .pchev { width: 10px; height: 10px; margin: 0 0 0 3px; }

.formula { height: 27px; flex: none; background: #262626; border-top: 1px solid #000; display: flex; align-items: center; font-size: 12.500px; font-weight: 500; }
.name { width: 63px; margin-left: 9px; letter-spacing: -.3px; }
.stepper { width: 7px; height: 20px; margin-right: 5px; }
.fx { width: 64px; height: 26px; }
.formula em { width: 31px; padding-left: 9px; font: italic 17px "Liberation Serif", serif; color: #6a6a6a; }
.entry { width: 1725px; height: 19px; background: #383838; }
.drop { width: 15px; text-align: center; font-size: 9px; color: #c5c5c5; }

.sheet { height: 788px; flex: none; background: #fff; border-top: 3px solid #d9d6d9; margin-left: -1px; width: 1920px; font-family: Lato, Carlito, sans-serif; color: #000; overflow: hidden; }
.cols { display: flex; height: 22px; background: #171717; border-bottom: 1px solid #8e8e8e; color: #f4f4f4; font-weight: 700; font-size: 11px; line-height: 21px; text-align: center; }
.cols span { width: 65px; flex: none; border-right: 1px solid #555; padding-left: 1px; }
.cols span.corner { width: 23px; border-right-color: #ddd; background: linear-gradient(135deg, transparent 50%, #666 50%) 6px 5px / 14px 14px no-repeat; }
.row { display: flex; height: 15px; font-size: 11px; line-height: 15px; }
.row > span { width: 65px; flex: none; border-right: 1px solid #d3d3d3; border-bottom: 1px solid #d3d3d3; overflow: hidden; padding: 0 2px; letter-spacing: -.3px; }
.row > .num { width: 23px; background: #171717; color: #fff; font-weight: 700; font-size: 11px; text-align: center; border-right-color: #ddd; border-bottom-color: #555; padding: 0; letter-spacing: 0; }
.cols .a, .row > .a { width: 159px; }
.cols .a { text-indent: -4px; }
.cols .b, .row > .b { width: 76px; }
.cols .c, .row > .c { width: 164px; }
.cols .d, .row > .d { width: 76px; }
.row > .a { text-indent: -5.500px; }
.row > .b, .row > .d { text-align: right; padding-right: 2px; letter-spacing: -.1px; }
.row > .d { padding-right: 3px; }
.row.head > .b, .row.head > .d { text-align: left; }
.body { position: relative; }
.sel { position: absolute; top: 14px; height: 760px; }
.purple { left: 256px; width: 167px; border: 2px solid #8360b4; background: rgba(131, 96, 180, .11); }
.blue { left: 423px; width: 76px; border-right: 2px solid #0f6fbe; background: rgba(15, 111, 190, .11); }
.rose { left: 421px; width: 78px; top: 0; height: 16px; border: 2px solid #cc3340; border-top: 0; background: linear-gradient(#cc3340, #cc3340) 0 0 / 3px 2px no-repeat, linear-gradient(#cc3340, #cc3340) 100% 0 / 3px 2px no-repeat, rgba(220, 50, 60, .11); }
.knob { position: absolute; width: 7px; height: 7px; top: 11px; border: 1px solid #fff; background: #8360b4; }
.k1 { left: 254px; }
.k2 { left: 418px; }
.k3 { left: 494px; background: #cc3340; }

.chart { position: absolute; left: 557px; top: 72px; width: 733px; height: 514px; margin: 0; border: 1px solid #a9a9a9; padding: 4px; background: #fff; }
.map { width: 723px; height: 504px; background: #595959; box-shadow: 0 0 0 1px #b5b5b5; }
.land path { stroke: #98a3a6; stroke-width: 1.400; stroke-linejoin: round; }
.land .us { fill: #00889b; stroke: #1b7f8e; }
.lt { fill: #d4ebf1; }
.gr { fill: #e0e0e0; }
.mx, .in { fill: #a8d3dc; }
.br, .id, .es { fill: #bbdee7; }
.cn { fill: #a0cfd9; }
.fr { fill: #8dc5d0; }
.land .ln { fill: none; }
.land .sea { fill: #595959; stroke: none; }
figcaption { position: absolute; right: 9px; bottom: 8px; text-align: right; font: 700 5.700px/8px Lato, sans-serif; letter-spacing: -.06px; color: #f2f2f2; white-space: nowrap; }
.grip { position: absolute; width: 8px; height: 8px; background: #fff; border: 1px solid #8d8d8d; border-radius: 1px; }
.nw, .n, .ne { top: -3px; }
.w, .e { top: 252px; }
.sw, .s, .se { bottom: -2px; }
.nw, .w, .sw { left: -3px; }
.n, .s { left: 361px; }
.ne, .e, .se { right: -2px; }

.sheettabs { height: 27px; flex: none; background: #303030; border-top: 1px solid #5c5c5c; border-bottom: 1px solid #000; display: flex; font-size: 12.500px; font-weight: 500; letter-spacing: -.2px; color: #878787; }
.arrows { width: 59px; background: #363636; }
.arrows svg { width: 60px; height: 25px; }
.st { border-left: 1px solid #585858; background: #212121; line-height: 24px; text-align: center; }
.raw { width: 88px; }
.explore { width: 107px; }
.analyze { width: 178px; letter-spacing: -.5px; }
.current { width: 78px; height: 22px; background: #fff; color: #16885a; font-weight: 700; margin-top: -1px; border: 0; }
.plus { width: 39px; border-right: 1px solid #585858; display: grid; place-items: center; }
.plus svg { width: 10px; height: 10px; }

.status { height: 22px; flex: none; background: linear-gradient(#494949, #3c3c3c); display: flex; align-items: center; font-size: 12px; letter-spacing: -.2px; color: #f0f0f0; padding-bottom: 1px; }
.ready { margin-left: 23px; width: 54px; }
.macro { width: 20px; height: 22px; }
.access { width: 18px; height: 22px; margin-left: 12px; }
.acc { margin-left: 2px; width: 1133px; letter-spacing: 0; }
.avg { width: 148px; }
.cnt { width: 82px; }
.sum { width: 108px; }
.views { width: 110px; height: 21px; }
.minus { width: 8px; height: 2px; background: #fff; margin-left: 6px; }
.track { width: 100px; height: 5px; border-radius: 3px; background: #727272; margin-left: 7px; display: flex; justify-content: center; align-items: center; }
.track i { width: 16px; height: 16px; border-radius: 50%; background: #a9a9a9; }
.zoomin { width: 8px; height: 8px; margin-left: 7px; }
.pct { margin-left: 17px; }
.desk { width: 1920px; height: 54px; }
```
FILE: sheet.js
```js
const rows = `Country|Total Sales|Country|Total Sales
United States|2,297,200.86|United States|2,297,200.86
Australia|925,235.85|Australia|925,235.85
Germany|628,840.03|France|858,931.08
Senegal|28,848.90|China|700,562.03
New Zealand|172,020.62|Germany|628,840.03
Afghanistan|21,673.32|Mexico|622,590.62
Saudi Arabia|82,012.20|India|589,650.10
Brazil|361,106.42|United Kingdom|528,576.30
China|700,562.03|Indonesia|404,887.50
France|858,931.08|Brazil|361,106.42
Italy|289,709.66|Italy|289,709.66
Tanzania|26,816.14|Spain|287,146.68
Poland|44,228.85|Philippines|183,420.17
United Kingdom|528,576.30|El Salvador|177,554.90
Mexico|622,590.62|New Zealand|172,020.62
El Salvador|177,554.90|Cuba|158,854.94
Taiwan|7,647.63|Nicaragua|149,687.06
India|589,650.10|Guatemala|131,602.47
Dominican Republic|126,140.58|Dominican Republic|126,140.58
Democratic Republic of the Congo|87,416.58|Iran|113,746.11
Indonesia|404,887.50|Turkey|108,507.95
Uruguay|9,712.54|Japan|100,787.52
Iran|113,746.11|South Africa|95,292.27
Mozambique|21,302.88|Austria|92,539.05
Bangladesh|78,256.47|Honduras|90,125.65
Spain|287,146.68|Democratic Republic of the Congo|87,416.58
Ukraine|86,857.17|Morocco|87,077.94
Nicaragua|149,687.06|Ukraine|86,857.17
Morocco|87,077.94|Egypt|84,139.32
Canada|66,928.17|Russia|82,913.88
Philippines|183,420.17|Saudi Arabia|82,012.20
Austria|92,539.05|Colombia|81,502.53
Colombia|81,502.53|Bangladesh|78,256.47
Netherlands|77,514.95|Netherlands|77,514.95
Malaysia|61,362.21|Thailand|77,051.96
Ecuador|13,342.98|Iraq|70,714.80
Thailand|77,051.96|Canada|66,928.17
Somalia|8,185.05|Vietnam|65,800.20
Guatemala|131,602.47|Malaysia|61,362.21
Belarus|13,386.09|Pakistan|58,872.61
Cambodia|17,476.02|Argentina|57,511.78
South Africa|95,292.27|Nigeria|54,350.35
Japan|100,787.52|Panama|51,539.93
Russia|82,913.88|Belgium|49,226.70
Egypt|84,139.32|Poland|44,228.85
Azerbaijan|5,631.51|Singapore|40,286.25
Lithuania|6,724.33|Romania|37,256.58
Argentina|57,511.78|Algeria|36,091.59
Lesotho|6,711.99|Chile|35,447.07
Vietnam|65,800.20|Myanmar (Burma)|34,138.87`.split("\n").map(line => line.split("|"));

const letters = [..."ABCDEFGHIJKLMNOPQRSTUVWXYZ"];
const cell = (text, cls) => {
  const el = document.createElement("span");
  if (cls) el.className = cls;
  el.textContent = text;
  return el;
};

document.getElementById("cols").append(cell("", "corner"), ...letters.map((l, i) => cell(l, i < 4 ? l.toLowerCase() : "")));

const grid = document.createDocumentFragment();
rows.forEach((values, r) => {
  const row = document.createElement("div");
  row.className = r ? "row" : "row head";
  row.append(cell(r + 1, "num"));
  letters.forEach((l, i) => {
    const value = values[i] || "";
    row.append(cell(r && i % 2 && value ? "$" + value : value, i < 4 ? l.toLowerCase() : ""));
  });
  grid.append(row);
});
document.getElementById("body").prepend(grid);
```
